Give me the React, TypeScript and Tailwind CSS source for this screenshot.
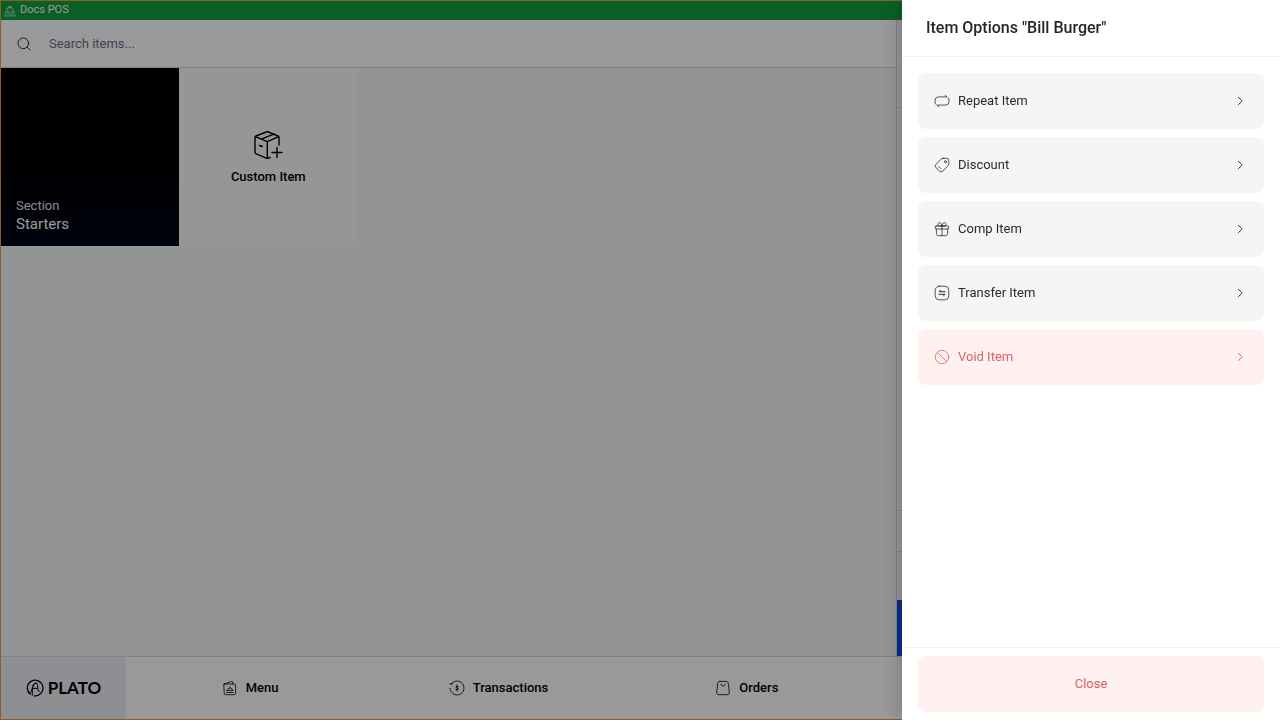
import React, { useState } from 'react';
import { Ban, Search } from 'lucide-react';

interface IconProps {
  className?: string;
}

const Svg: React.FC<IconProps & { children: React.ReactNode }> = ({ className = 'size-4', children }) => (
  <svg
    viewBox="0 0 16 16"
    fill="none"
    stroke="currentColor"
    strokeWidth="0.8"
    strokeLinecap="round"
    strokeLinejoin="round"
    className={className}
    aria-hidden="true"
  >
    {children}
  </svg>
);

const ChevronIcon = () => (
  <Svg>
    <path d="m6.5 4.5 3.1 2.9c.3.4.3.8 0 1.2l-3.1 2.9" strokeWidth="1" />
  </Svg>
);

const RepeatIcon = () => (
  <Svg>
    <path d="M1 9.2V7.4a3.5 3.5 0 0 1 3.5-3.5h7.9M11.4 2.2l1.3 1.6M15 6.8v1.8a3.5 3.5 0 0 1-3.5 3.5H3.6M4.6 13.8l-1.3-1.6" />
    <path d="M14 4.6c.5.5.8 1.1 1 1.8M2 11.4c-.5-.5-.8-1.100-1-1.800" />
  </Svg>
);

const TagIcon = () => (
  <Svg>
    <path d="M9 1.3h3.6a2.2 2.2 0 0 1 2.2 2.2v3.3c0 .7-.2 1.3-.7 1.8l-5.3 5.5a2.3 2.3 0 0 1-3.3 0L2 10.7a2.3 2.3 0 0 1 0-3.3L7.3 2A2.5 2.5 0 0 1 9 1.3Z" />
    <circle cx="11.5" cy="4.7" r="1.1" />
    <path d="m4.8 9.6 2 2" />
  </Svg>
);

const GiftIcon = () => (
  <Svg>
    <path d="M2.2 5h11.6c.6 0 .9.3.9.9v1.2c0 .6-.3.9-.9.9H2.2c-.6 0-.9-.3-.9-.9V5.9c0-.6.3-.9.9-.9ZM2.4 8v4.2c0 1.6.8 2.5 2.4 2.5h6.4c1.6 0 2.4-.9 2.4-2.5V8M8 5v9.7" />
    <path d="M8 5H4.4c-.8-.9-.8-2.6.4-3.2C6.2 1.2 7.8 2.4 8 5ZM8 5h3.6c.8-.9.8-2.6-.4-3.2C9.8 1.2 8.2 2.4 8 5Z" />
  </Svg>
);

const TransferIcon = () => (
  <Svg>
    <rect x="1.2" y="1.2" width="13.6" height="13.6" rx="4" />
    <path d="M11 6.7H5l1.5-1.4M5 9.3h6l-1.5 1.4" strokeWidth="1" />
  </Svg>
);

const BellIcon = () => (
  <Svg className="size-3">
    <path d="M8 1.2v3M6.2 2.7h3.6M3.6 9V7.4a4.4 4.4 0 0 1 8.8 0V9M2.8 9.2h10.4l1.4 3.6v1.8H1.4v-1.8zM4.5 12h7" />
  </Svg>
);

const MenuIcon = () => (
  <Svg>
    <path d="M2.2 4h9.9a1.5 1.5 0 0 1 1.5 1.5v7.7a1.5 1.5 0 0 1-1.5 1.5H3.7a1.5 1.5 0 0 1-1.5-1.5zM2.2 4l7.3-2.5c.8-.2 1.2.1 1.2.8V4M4.8 12.5H11M4.6 10.4h6.6M5.4 10.2c.2-3 4.9-3 5.1 0M8 7.8v-.9" />
  </Svg>
);

const TransactionsIcon = () => (
  <Svg>
    <path d="M2.1 4.2A7 7 0 1 1 1 8.3M.9 3.3l1.2 1.2 1.4-.8" />
    <path d="M9.3 6.6C8.700 5.8 6.800 5.900 6.800 7c0 1.200 2.600.7 2.600 2 0 1.200-2.100 1.200-2.800.3M8 5.100v5.800" />
  </Svg>
);

const OrdersIcon = () => (
  <Svg>
    <path d="M4.8 1.4h6.4c1.3 0 1.9.8 2.100 2l1 8.600c.2 1.700-.7 2.700-2.300 2.700H4c-1.600 0-2.500-1-2.300-2.700l1-8.600c.2-1.200.8-2 2.100-2ZM6 4.200c0 2.600 4 2.600 4 0" />
  </Svg>
);

const CustomItemIcon = () => (
  <svg viewBox="0 0 32 32" fill="none" stroke="currentColor" strokeWidth="1.4" strokeLinecap="round" strokeLinejoin="round" className="size-8" aria-hidden="true">
    <path d="M27 16V8.6c0-.8-.3-1.300-1-1.600l-9.700-4a3 3 0 0 0-2.100 0L4 7c-.7.3-1 .9-1 1.600v14.500c0 .8.4 1.400 1.100 1.700l10.300 4.400c.6.2 1.200.3 1.800 0l1.800-.7" />
    <path d="m3.500 7.700 11.800 5 11.300-5M15.300 12.700v16.500M9.300 10.100l12.400-5M7.500 16.500l2.800 1M25 18.500v10M20 23.500h10" />
  </svg>
);

const PlatoMark = () => (
  <svg viewBox="0 0 18 18" fill="none" stroke="currentColor" strokeWidth="1.3" strokeLinecap="round" className="size-[18px]" aria-hidden="true">
    <path d="M4.2 15.1A7.8 7.8 0 1 1 8.1 16.8" />
    <path d="M3.6 14.7c2.5-1.8 3.2-9.4 6.1-10.7 1.7-.5 1.8 2 2 4.1.2 2 .4 3.7 1.4 4.6M6.3 16.2V10c0-3.2 1.2-5.6 3.4-6M6.5 9.4h5.1" strokeWidth="1" />
  </svg>
);

const itemOptions = [
  { label: 'Repeat Item', Icon: RepeatIcon },
  { label: 'Discount', Icon: TagIcon },
  { label: 'Comp Item', Icon: GiftIcon },
  { label: 'Transfer Item', Icon: TransferIcon },
];

const navItems = [
  { label: 'Menu', Icon: MenuIcon },
  { label: 'Transactions', Icon: TransactionsIcon },
  { label: 'Orders', Icon: OrdersIcon },
];

const OptionsDrawer: React.FC<{ itemName: string; onClose: () => void }> = ({ itemName, onClose }) => (
  <div className="fixed inset-0 z-50 flex justify-end bg-black/40">
    <div
      role="dialog"
      aria-modal="true"
      aria-labelledby="drawer-title"
      className="flex w-[378px] max-w-full flex-col bg-white shadow-[-6px_0_16px_rgba(0,0,0,0.14)]"
    >
      <header className="flex h-[57px] shrink-0 items-center border-b border-[#f0f0f0] px-6">
        <h2 id="drawer-title" className="text-base font-medium text-[#262626]">
          Item Options "{itemName}"
        </h2>
      </header>

      <div className="flex flex-1 flex-col gap-2 overflow-auto p-4">
        {itemOptions.map(({ label, Icon }) => (
          <button key={label} type="button" className="flex h-14 shrink-0 items-center gap-2 rounded-lg bg-[#f5f5f5] px-4 text-[13px] text-[#2b2b2b]">
            <Icon />
            <span className="flex-1 text-left">{label}</span>
            <ChevronIcon />
          </button>
        ))}
        <button type="button" className="flex h-14 shrink-0 items-center gap-2 rounded-lg bg-[#fff1ef] px-4 text-[13px] text-[#d9636a]">
          <Ban size={16} strokeWidth={1.2} />
          <span className="flex-1 text-left">Void Item</span>
          <ChevronIcon />
        </button>
      </div>

      <footer className="flex shrink-0 border-t border-[#f0f0f0] px-4 py-2">
        <button type="button" onClick={onClose} className="h-14 flex-1 rounded-lg bg-[#fff1ef] text-[13px] text-[#d9636a]">
          Close
        </button>
      </footer>
    </div>
  </div>
);

export default function App() {
  const [search, setSearch] = useState('');
  const [isDrawerOpen, setIsDrawerOpen] = useState(true);

  return (
    <div className="flex min-h-screen flex-col border border-[#e0a040] bg-[#f5f7fa] font-[Roboto,'Liberation_Sans',sans-serif] text-black">
      <div className="flex h-[19px] items-center gap-1 bg-[#129e40] px-[3px] text-[11px] text-white">
        <BellIcon />
        <span>Docs POS</span>
      </div>

      <div className="flex flex-1">
        <main className="flex-1">
          <label className="flex h-12 items-center gap-[17px] border-b border-[#d5d9df] bg-white px-[15px]">
            <Search size={16} strokeWidth={1.2} />
            <input
              type="text"
              aria-label="Search items"
              value={search}
              onChange={e => setSearch(e.target.value)}
              placeholder="Search items..."
              className="flex-1 text-[13px] outline-none placeholder:text-[#64748b]"
            />
          </label>

          <div className="grid grid-cols-5 pr-1">
            <button type="button" className="flex aspect-square flex-col justify-end bg-linear-to-b from-black to-[#020617] px-[15px] py-3 text-left text-white">
              <span className="text-[13px] leading-4 opacity-90">Section</span>
              <span className="text-[15px] leading-5">Starters</span>
            </button>
            <button type="button" className="flex aspect-square flex-col items-center justify-center gap-2 bg-[#fbfbfb] text-[13px] leading-4 font-medium">
              <CustomItemIcon />
              Custom Item
            </button>
          </div>
        </main>

        <aside className="flex w-[383px] flex-col border-l border-[#d5d9df] bg-[#f8fafc]">
          <div className="h-[88px] border-b border-[#d5d9df]" />
          <div className="flex-1" />
          <div className="h-[42px] border-y border-[#d5d9df]" />
          <div className="h-12" />
          <button type="button" aria-label="Pay" className="h-14 bg-blue-700" />
        </aside>
      </div>

      <nav className="flex h-[63px] border-t border-[#d5d9df] bg-white">
        <a href="#home" className="flex w-[125px] items-center justify-center gap-1 bg-[#ebeef5]">
          <PlatoMark />
          <span className="font-[Lato,sans-serif] text-[17px] font-bold">PLATO</span>
        </a>
        {navItems.map(({ label, Icon }) => (
          <a key={label} href="#view" className="flex flex-1 items-center justify-center gap-2 text-[13px] font-medium">
            <Icon />
            {label}
          </a>
        ))}
        <div className="w-[408px]" />
      </nav>

      {isDrawerOpen && <OptionsDrawer itemName="Bill Burger" onClose={() => setIsDrawerOpen(false)} />}
    </div>
  );
}
